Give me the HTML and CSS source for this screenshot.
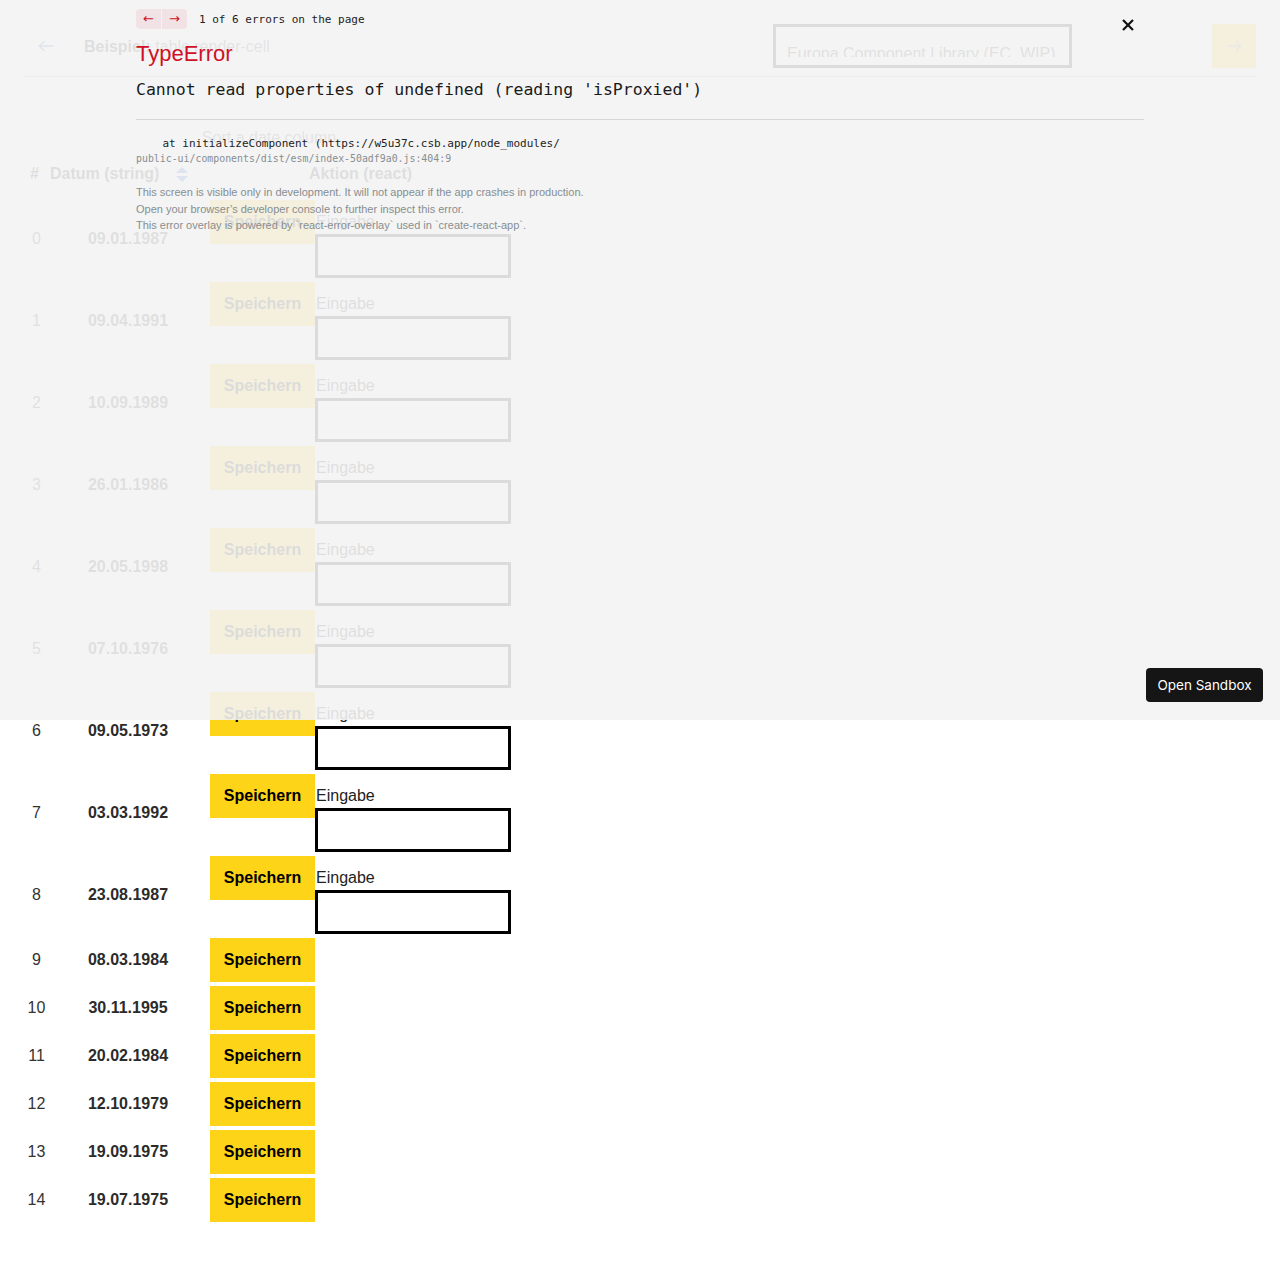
FILE: index.html
```html
<!DOCTYPE html>
<html lang="de">
<head>
<meta charset="utf-8">
<title>Beispiel: table render-cell</title>
<link rel="stylesheet" href="styles.css">
</head>
<body>
<div class="page">
  <header class="topbar">
    <button class="back" aria-label="Zurück">
      <svg width="16" height="12" viewBox="0 0 16 12"><path d="M15.5 6H1.2M6.2 1.2L1.2 6l5 4.8" fill="none" stroke="#1d5fbf" stroke-width="1.3"/></svg>
    </button>
    <h1 class="title"><strong>Beispiel:</strong> table render-cell</h1>
    <div class="search"><div class="search-clip">Europa Component Library (EC, WIP)</div></div>
    <button class="go" aria-label="Weiter">
      <svg width="16" height="12" viewBox="0 0 16 12"><path d="M0.5 6H14.8M9.8 1.2L14.8 6l-5 4.8" fill="none" stroke="#8a8a8a" stroke-width="1.3"/></svg>
    </button>
  </header>

  <table class="grid">
    <caption>Sort a date column</caption>
    <thead>
      <tr>
        <th class="c-num">#</th>
        <th class="c-date">
          <div class="th-sort"><span class="th-label">Datum (string)</span>
            <button class="sort" aria-label="Sortieren"><svg width="12" height="15" viewBox="0 0 12 15"><path d="M0 6L6 0L12 6Z M0 9L6 15L12 9Z" fill="#1d62c7"/></svg></button>
          </div>
        </th>
        <th class="c-act">Aktion (react)</th>
      </tr>
    </thead>
    <tbody>
      <tr><td class="c-num">0</td><td class="c-date">09.01.1987</td><td class="c-act"><div class="act"><button class="save">Speichern</button><div class="field"><label>Eingabe</label><input type="text"></div></div></td></tr>
      <tr><td class="c-num">1</td><td class="c-date">09.04.1991</td><td class="c-act"><div class="act"><button class="save">Speichern</button><div class="field"><label>Eingabe</label><input type="text"></div></div></td></tr>
      <tr><td class="c-num">2</td><td class="c-date">10.09.1989</td><td class="c-act"><div class="act"><button class="save">Speichern</button><div class="field"><label>Eingabe</label><input type="text"></div></div></td></tr>
      <tr><td class="c-num">3</td><td class="c-date">26.01.1986</td><td class="c-act"><div class="act"><button class="save">Speichern</button><div class="field"><label>Eingabe</label><input type="text"></div></div></td></tr>
      <tr><td class="c-num">4</td><td class="c-date">20.05.1998</td><td class="c-act"><div class="act"><button class="save">Speichern</button><div class="field"><label>Eingabe</label><input type="text"></div></div></td></tr>
      <tr><td class="c-num">5</td><td class="c-date">07.10.1976</td><td class="c-act"><div class="act"><button class="save">Speichern</button><div class="field"><label>Eingabe</label><input type="text"></div></div></td></tr>
      <tr><td class="c-num">6</td><td class="c-date">09.05.1973</td><td class="c-act"><div class="act"><button class="save">Speichern</button><div class="field"><label>Eingabe</label><input type="text"></div></div></td></tr>
      <tr><td class="c-num">7</td><td class="c-date">03.03.1992</td><td class="c-act"><div class="act"><button class="save">Speichern</button><div class="field"><label>Eingabe</label><input type="text"></div></div></td></tr>
      <tr><td class="c-num">8</td><td class="c-date">23.08.1987</td><td class="c-act"><div class="act"><button class="save">Speichern</button><div class="field"><label>Eingabe</label><input type="text"></div></div></td></tr>
      <tr><td class="c-num">9</td><td class="c-date">08.03.1984</td><td class="c-act"><div class="act"><button class="save">Speichern</button></div></td></tr>
      <tr><td class="c-num">10</td><td class="c-date">30.11.1995</td><td class="c-act"><div class="act"><button class="save">Speichern</button></div></td></tr>
      <tr><td class="c-num">11</td><td class="c-date">20.02.1984</td><td class="c-act"><div class="act"><button class="save">Speichern</button></div></td></tr>
      <tr><td class="c-num">12</td><td class="c-date">12.10.1979</td><td class="c-act"><div class="act"><button class="save">Speichern</button></div></td></tr>
      <tr><td class="c-num">13</td><td class="c-date">19.09.1975</td><td class="c-act"><div class="act"><button class="save">Speichern</button></div></td></tr>
      <tr><td class="c-num">14</td><td class="c-date">19.07.1975</td><td class="c-act"><div class="act"><button class="save">Speichern</button></div></td></tr>
    </tbody>
  </table>
</div>

<div class="overlay">
  <div class="ov-box">
    <div class="ov-nav">
      <button class="ov-prev">←</button><button class="ov-next">→</button>
      <span class="ov-count">1 of 6 errors on the page</span>
    </div>
    <div class="ov-title">TypeError</div>
    <div class="ov-msg">Cannot read properties of undefined (reading 'isProxied')</div>
    <div class="ov-rule"></div>
    <div class="ov-frame">
      <div class="ov-fn">    at initializeComponent (https://w5u37c.csb.app/node_modules/</div>
      <div class="ov-file">public-ui/components/dist/esm/index-50adf9a0.js:404:9</div>
    </div>
    <div class="ov-footer">
      <div>This screen is visible only in development. It will not appear if the app crashes in production.</div>
      <div>Open your browser’s developer console to further inspect this error.</div>
      <div>This error overlay is powered by `react-error-overlay` used in `create-react-app`.</div>
    </div>
    <button class="ov-close" aria-label="Close">
      <svg width="12" height="12" viewBox="0 0 12 12"><path d="M1 1L11 11M11 1L1 11" stroke="#111" stroke-width="2.2" fill="none"/></svg>
    </button>
  </div>
  <button class="open-sandbox">Open Sandbox</button>
</div>
</body>
</html>
```

FILE: styles.css
```css
* { box-sizing: border-box; }
html, body { margin: 0; padding: 0; }
body {
  position: relative;
  font-family: "Liberation Sans", Arial, sans-serif;
  font-size: 16px;
  color: #222;
  background: #fff;
  min-height: 1279px;
}

.page { padding: 24px; }

/* header */
.topbar {
  display: flex;
  align-items: center;
  height: 53px;
  padding-bottom: 8px;
  border-bottom: 1px solid #aaa;
}
.back {
  width: 44px; height: 44px;
  display: flex; align-items: center; justify-content: center;
  border: 0; padding: 0; background: transparent;
}
.title {
  margin: 0 0 0 16px;
  padding-top: 2px;
  font-size: 16px;
  font-weight: normal;
  color: #555;
}
.title strong { color: #222; font-weight: bold; }
.search {
  margin-left: auto;
  width: 299px; height: 44px;
  border: 3px solid #111;
  padding-left: 11px;
  overflow: hidden;
  color: #333;
}
.search-clip {
  height: 30px;
  overflow: hidden;
  padding-top: 18px;
  line-height: 18px;
  white-space: nowrap;
}
.go {
  margin-left: 140px;
  width: 44px; height: 44px;
  border: 0; padding: 0;
  background: #fdd417;
  display: flex; align-items: center; justify-content: center;
}

/* table */
.grid {
  margin-top: 50px;
  border-collapse: separate;
  border-spacing: 2px;
}
.grid caption {
  line-height: 20px;
  padding-top: 1px;
  padding-bottom: 1px;
  color: #555;
}
.grid th, .grid td {
  box-sizing: content-box;
  padding: 1px;
  vertical-align: middle;
}
.grid th { font-weight: bold; color: #222; white-space: nowrap; }
.c-num { width: 19px; text-align: center; color: #333; }
th.c-num { text-align: left; padding-left: 4px; width: 16px; }
.c-date { width: 156px; text-align: center; }
td.c-date { font-weight: bold; color: #2b2b2b; }
.c-act { width: 301px; }
th.c-act { text-align: center; }
td.c-act { text-align: left; }

.th-sort { display: flex; align-items: center; }
.th-label { flex: 0 0 auto; }
.sort {
  flex: 0 0 auto;
  margin-left: 2px;
  width: 42px; height: 44px;
  border: 0; padding: 0; background: transparent;
  display: flex; align-items: center; justify-content: center;
}

.act { display: flex; align-items: flex-start; }
.save {
  width: 105px; height: 44px;
  border: 0; padding: 0;
  background: #fdd417;
  color: #000;
  font-family: "Liberation Sans", Arial, sans-serif;
  font-size: 16px;
  font-weight: bold;
}
.field { margin-top: 10px; display: flex; flex-direction: column; }
.field label { line-height: 24px; padding-left: 1px; color: #222; }
.field input {
  display: block;
  width: 196px; height: 44px;
  margin: 0; padding: 0 8px;
  border: 3px solid #000;
  background: #fff;
  font: 16px "Liberation Sans", Arial, sans-serif;
}

/* error overlay */
.overlay {
  position: absolute;
  top: 0; left: 0;
  width: 1280px; height: 720px;
  background: rgba(243, 243, 243, 0.9);
  z-index: 10;
}
.ov-box {
  position: relative;
  width: 1024px; height: 100%;
  margin: 0 auto;
  padding: 8px;
  font-family: "DejaVu Sans Mono", monospace;
  font-size: 11px;
  line-height: 1.5;
  color: #000;
}
.ov-nav { display: flex; align-items: center; height: 20px; margin-top: 1px; }
.ov-prev, .ov-next {
  width: 25px; height: 20px;
  border: 0; padding: 0;
  background: rgba(206, 17, 38, 0.07);
  color: #ce1126;
  font: 13px/20px "DejaVu Sans", sans-serif;
}
.ov-prev { border-radius: 4px 0 0 4px; margin-right: 1px; }
.ov-next { border-radius: 0 4px 4px 0; }
.ov-count { margin-left: 12px; color: #222; padding-top: 2px; }
.ov-title {
  margin-top: 11px;
  font-family: "Liberation Sans", Arial, sans-serif;
  font-size: 22px;
  line-height: 28px;
  color: #ce1126;
}
.ov-msg {
  margin-top: 10px;
  font-size: 16.5px;
  line-height: 24px;
  color: #1a1a1a;
  white-space: pre;
}
.ov-rule { margin-top: 17px; height: 1px; background: #d6d6d6; }
.ov-frame { margin-top: 16px; }
.ov-fn { white-space: pre; line-height: 16px; color: #222; }
.ov-file { margin-top: -1px; font-size: 9.9px; line-height: 16px; color: #878e91; }
.ov-footer {
  margin-top: 17px;
  font-family: "Liberation Sans", Arial, sans-serif;
  font-size: 11px;
  line-height: 16.5px;
  color: #878e91;
}
.ov-close {
  position: absolute;
  top: 19px; right: 18px;
  width: 12px; height: 12px;
  border: 0; padding: 0; background: transparent;
  display: block;
}
.ov-close svg { display: block; }
.open-sandbox {
  position: absolute;
  right: 17px; bottom: 18px;
  width: 117px; height: 34px;
  border: 0; border-radius: 4px;
  background: #151515;
  color: #fff;
  font: 13.5px "Inter", "Liberation Sans", sans-serif;
  padding: 0;
}
```
